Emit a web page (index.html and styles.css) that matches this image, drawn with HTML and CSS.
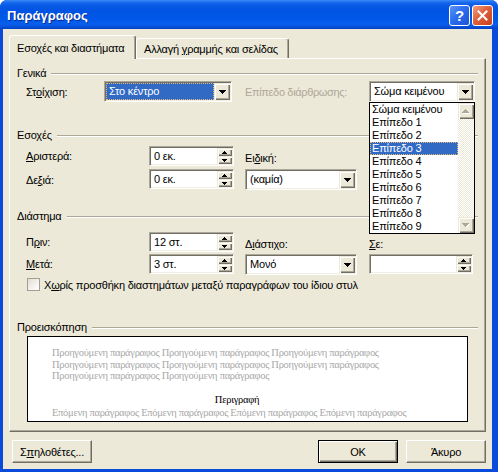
FILE: index.html
```html
<!DOCTYPE html>
<html>
<head>
<meta charset="utf-8">
<link rel="stylesheet" href="styles.css">
</head>
<body>
<div class="window">
  <div class="titlebar">
    <span class="title">Παράγραφος</span>
    <div class="caption-btns">
      <span class="cbtn help">?</span>
      <span class="cbtn close"><svg width="11" height="11" viewBox="0 0 11 11"><path d="M1.5 1.5L9.5 9.5M9.5 1.5L1.5 9.5" stroke="#fff" stroke-width="2" stroke-linecap="square"/></svg></span>
    </div>
  </div>
  <div class="client">
    <div class="tabs">
      <div class="tab active">Εσο<u>χ</u>ές και διαστήματα</div>
      <div class="tab second">Αλλαγή <u>γ</u>ραμμής και σελίδας</div>
    </div>
    <div class="pane">
      <div class="group-head"><span>Γενικά</span><i></i></div>
      <div class="row-gen">
        <span class="lbl">Στ<u>ο</u>ίχιση:</span>
        <div class="combo">
          <span class="val sel">Στο κέντρο</span>
          <span class="ddbtn"><svg width="7" height="4" shape-rendering="crispEdges"><path d="M0 0h7v1h-1v1h-1v1h-1v1h-1v-1h-1v-1h-1v-1h-1z"/></svg></span>
        </div>
        <span></span>
        <span class="lbl-dis">Επίπεδο διάρθρωσης:</span>
        <div class="combo">
          <span class="val">Σώμα κειμένου</span>
          <span class="ddbtn"><svg width="7" height="4" shape-rendering="crispEdges"><path d="M0 0h7v1h-1v1h-1v1h-1v1h-1v-1h-1v-1h-1v-1h-1z"/></svg></span>
          <div class="ddlist">
            <div class="items">
              <div class="item">Σώμα κειμένου</div>
              <div class="item">Επίπεδο 1</div>
              <div class="item">Επίπεδο 2</div>
              <div class="item hl">Επίπεδο 3</div>
              <div class="item">Επίπεδο 4</div>
              <div class="item">Επίπεδο 5</div>
              <div class="item">Επίπεδο 6</div>
              <div class="item">Επίπεδο 7</div>
              <div class="item">Επίπεδο 8</div>
              <div class="item">Επίπεδο 9</div>
            </div>
            <div class="sb">
              <span class="sbbtn"><svg width="8" height="5" shape-rendering="crispEdges"><path d="M1 4h7v1h-7z" fill="#fff"/><path d="M3 0h1v1h1v1h1v1h1v1h-7v-1h1v-1h1v-1h1z" fill="#ACA899"/></svg></span>
              <span class="track"></span>
              <span class="sbbtn"><svg width="8" height="5" shape-rendering="crispEdges"><path d="M1 1h7v1h-1v1h-1v1h-1v1h-1v-1h-1v-1h-1v-1h-1z" fill="#fff"/><path d="M0 0h7v1h-1v1h-1v1h-1v1h-1v-1h-1v-1h-1v-1h-1z" fill="#ACA899"/></svg></span>
            </div>
          </div>
        </div>
      </div>

      <div class="group-head g2"><span>Εσοχές</span><i></i></div>
      <div class="grid-ind">
        <span class="lbl"><u>Α</u>ριστερά:</span>
        <div class="spin"><span class="val">0 εκ.</span><span class="sbtns"><span><svg width="5" height="3" shape-rendering="crispEdges"><path d="M2 0h1v1h1v1h1v1h-5v-1h1v-1h1z"/></svg></span><span><svg width="5" height="3" shape-rendering="crispEdges"><path d="M0 0h5v1h-1v1h-1v1h-1v-1h-1v-1h-1z"/></svg></span></span></div>
        <span></span>
        <span class="lbl-top">Ει<u>δ</u>ική:</span>
        <span></span><span></span>
        <span class="lbl">Δε<u>ξ</u>ιά:</span>
        <div class="spin"><span class="val">0 εκ.</span><span class="sbtns"><span><svg width="5" height="3" shape-rendering="crispEdges"><path d="M2 0h1v1h1v1h1v1h-5v-1h1v-1h1z"/></svg></span><span><svg width="5" height="3" shape-rendering="crispEdges"><path d="M0 0h5v1h-1v1h-1v1h-1v-1h-1v-1h-1z"/></svg></span></span></div>
        <span></span>
        <div class="combo"><span class="val">(καμία)</span><span class="ddbtn"><svg width="7" height="4" shape-rendering="crispEdges"><path d="M0 0h7v1h-1v1h-1v1h-1v1h-1v-1h-1v-1h-1v-1h-1z"/></svg></span></div>
        <span></span><span></span>
      </div>

      <div class="group-head g3"><span>Διάστημα</span><i></i></div>
      <div class="grid-sp">
        <span class="lbl">Π<u>ρ</u>ιν:</span>
        <div class="spin"><span class="val">12 στ.</span><span class="sbtns"><span><svg width="5" height="3" shape-rendering="crispEdges"><path d="M2 0h1v1h1v1h1v1h-5v-1h1v-1h1z"/></svg></span><span><svg width="5" height="3" shape-rendering="crispEdges"><path d="M0 0h5v1h-1v1h-1v1h-1v-1h-1v-1h-1z"/></svg></span></span></div>
        <span></span>
        <span class="lbl-top">Δ<u>ι</u>άστιχο:</span>
        <span></span>
        <span class="lbl-top"><u>Σ</u>ε:</span>
        <span class="lbl"><u>Μ</u>ετά:</span>
        <div class="spin"><span class="val">3 στ.</span><span class="sbtns"><span><svg width="5" height="3" shape-rendering="crispEdges"><path d="M2 0h1v1h1v1h1v1h-5v-1h1v-1h1z"/></svg></span><span><svg width="5" height="3" shape-rendering="crispEdges"><path d="M0 0h5v1h-1v1h-1v1h-1v-1h-1v-1h-1z"/></svg></span></span></div>
        <span></span>
        <div class="combo"><span class="val">Μονό</span><span class="ddbtn"><svg width="7" height="4" shape-rendering="crispEdges"><path d="M0 0h7v1h-1v1h-1v1h-1v1h-1v-1h-1v-1h-1v-1h-1z"/></svg></span></div>
        <span></span>
        <div class="spin"><span class="val"></span><span class="sbtns"><span><svg width="5" height="3" shape-rendering="crispEdges"><path d="M2 0h1v1h1v1h1v1h-5v-1h1v-1h1z"/></svg></span><span><svg width="5" height="3" shape-rendering="crispEdges"><path d="M0 0h5v1h-1v1h-1v1h-1v-1h-1v-1h-1z"/></svg></span></span></div>
      </div>

      <div class="check-row"><span class="chk"></span><span>Χ<u>ω</u>ρίς προσθήκη διαστημάτων μεταξύ παραγράφων του ίδιου στυλ</span></div>

      <div class="group-head g4"><span>Προεισκόπηση</span><i></i></div>
      <div class="preview">
        <div class="prev">Προηγούμενη παράγραφος Προηγούμενη παράγραφος Προηγούμενη παράγραφος<br>Προηγούμενη παράγραφος Προηγούμενη παράγραφος Προηγούμενη παράγραφος<br>Προηγούμενη παράγραφος Προηγούμενη παράγραφος</div>
        <div class="cur">Περιγραφή</div>
        <div class="prev next">Επόμενη παράγραφος Επόμενη παράγραφος Επόμενη παράγραφος Επόμενη παράγραφος</div>
      </div>
    </div>
    <div class="buttons">
      <span class="btn">Σ<u>π</u>ηλοθέτες...</span>
      <span class="spacer"></span>
      <span class="btn default">OK</span>
      <span class="btn">Άκυρο</span>
    </div>
  </div>
</div>
</body>
</html>
```
FILE: styles.css
```css
* { box-sizing: border-box; }
html, body { margin: 0; padding: 0; }
body {
  width: 498px; height: 472px; overflow: hidden; background: #fff;
  font-family: "Liberation Sans", Arial, sans-serif; font-size: 11px; color: #000;
  letter-spacing: -0.2px;
}
u { text-decoration: underline; text-underline-offset: 1px; }

.window {
  width: 498px; height: 472px; display: flex; flex-direction: column;
  background: #0A4BDC; border-radius: 7px 7px 0 0; overflow: hidden;
}
.titlebar {
  height: 29px; flex: none; display: flex; align-items: center;
  padding: 0 5px 0 7px;
  background: linear-gradient(to bottom, #3B8DF8 0, #2C7BF2 1px, #1366EC 3px, #0658E4 6px, #0054E3 12px, #0058E8 20px, #0A5FEC 24px, #0550D8 27px, #0440C0 29px);
}
.title {
  flex: 1; color: #fff; font-weight: bold; font-size: 13px; letter-spacing: 0;
  font-family: "Liberation Sans", Arial, sans-serif;
  text-shadow: 1px 1px #0B2C9A; margin-top: 1px;
}
.caption-btns { display: flex; gap: 2px; margin-top: 1px; }
.cbtn {
  width: 21px; height: 21px; border: 1px solid #fff; border-radius: 3px;
  display: flex; align-items: center; justify-content: center;
}
.help {
  background: linear-gradient(135deg, #5C93F7 0%, #2A6AEB 50%, #1C54D8 100%);
  color: #fff; font: bold 15px "Liberation Sans", Arial, sans-serif;
}
.close { background: linear-gradient(135deg, #EE9F82 0%, #E0603A 45%, #C8401C 100%); }

.client {
  flex: 1; background: #ECE9D8; margin: 0 6px 3px 3px;
  display: flex; flex-direction: column;
}
.tabs { height: 29px; flex: none; display: flex; align-items: flex-end; padding-left: 6px; }
.tab {
  background: #ECE9D8; border-top: 1px solid #fff; border-left: 1px solid #fff;
  border-right: 1px solid #716F64; box-shadow: inset -1px 0 #ACA899;
  border-radius: 3px 3px 0 0; padding: 0 7px; line-height: 13px; white-space: nowrap;
}
.tab.active {
  width: 127px; height: 24px; padding-top: 6px; margin-bottom: -1px;
  position: relative; z-index: 2;
}
.tab.second { width: 153px; height: 20px; padding-top: 4px; }

.pane {
  height: 374px; flex: none; margin: 0 6px; position: relative;
  border: 1px solid; border-color: #fff #716F64 #716F64 #fff;
  box-shadow: inset -1px -1px #ACA899;
  padding: 0 7px;
}
.group-head { display: flex; align-items: center; height: 13px; line-height: 13px; margin-top: 8px; }
.group-head i {
  flex: 1; height: 2px; margin-left: 5px; margin-top: 1px;
  border-top: 1px solid #ACA899; border-bottom: 1px solid #fff;
}
.group-head.g2 { margin-top: 27px; }
.group-head.g3 { margin-top: 20px; }
.group-head.g4 { margin-top: 30px; }

.lbl { padding-left: 9px; align-self: center; white-space: nowrap; }
.lbl-dis { color: #ACA899; align-self: center; white-space: nowrap; letter-spacing: -0.35px; }
.lbl-top { align-self: end; line-height: 13px; white-space: nowrap; margin-bottom: 1px; }

.row-gen {
  display: grid; grid-template-columns: 87px 128px 13px 124px 106px;
  height: 21px; margin-top: 1px;
}
.grid-ind {
  display: grid; grid-template-columns: 132px 85px 11px 112px 12px 104px;
  grid-template-rows: 20px 21px; row-gap: 3px; margin-top: 4px;
}
.grid-sp {
  display: grid; grid-template-columns: 132px 85px 11px 112px 12px 104px;
  grid-template-rows: 20px 20px; row-gap: 2px; margin-top: 9px;
}

.combo, .spin {
  position: relative; display: flex; background: #fff; padding: 2px;
  border: 1px solid; border-color: #ACA899 #fff #fff #ACA899;
  box-shadow: inset 1px 1px #716F64, inset -1px -1px #F1EFE2;
}
.combo { height: 21px; }
.spin { height: 20px; }
.combo .val, .spin .val { flex: 1; padding-left: 2px; white-space: nowrap; overflow: hidden; }
.combo .val { line-height: 15px; }
.combo .val.sel {
  background: #316AC5; color: #fff; margin: -1px 0 -1px -1px; padding-left: 3px; line-height: 17px;
  outline: 1px dotted #E8B878; outline-offset: -1px;
}
.spin .val { line-height: 14px; }
.ddbtn, .sbtns > span, .sbbtn {
  background: #ECE9D8; display: flex; align-items: center; justify-content: center;
  box-shadow: inset 1px 1px #ECE9D8, inset 2px 2px #fff, inset -1px -1px #716F64, inset -2px -2px #ACA899;
}
.ddbtn { width: 16px; margin: -1px -1px -1px 0; }
.ddbtn svg, .sbtns svg { display: block; }
.sbtns { width: 15px; display: flex; flex-direction: column; margin: -1px -1px -1px 0; }
.sbtns > span { flex: 1; }

.ddlist {
  position: absolute; left: -1px; top: calc(100% + 1px); width: 106px; height: 132px;
  border: 1px solid #000; background: #fff; display: flex; z-index: 5;
}
.items { flex: 1; }
.item { height: 13px; line-height: 13px; padding-left: 2px; white-space: nowrap; }
.item.hl { background: #316AC5; color: #fff; outline: 1px dotted #E8B878; outline-offset: -1px; }
.sb { width: 16px; display: flex; flex-direction: column; }
.sbbtn { height: 16px; flex: none; }
.track {
  flex: 1;
  background: repeating-conic-gradient(#fff 0 25%, #ECE9D8 0 50%) 0 0 / 2px 2px;
}

.check-row { display: flex; align-items: center; margin-top: 4px; padding-left: 10px; height: 13px; white-space: nowrap; }
.chk {
  width: 13px; height: 13px; margin-right: 4px; border: 1px solid #A29F91;
  background: linear-gradient(135deg, #E0DED4 0%, #F4F3EE 60%, #fff 100%);
}

.preview {
  margin: 2px 10px 0 10px; height: 86px; background: #fff; border: 1px solid #000;
  padding: 10px 45px 0 24px;
  font-family: "Liberation Serif", "Times New Roman", serif; font-size: 10.5px;
  line-height: 11.5px; letter-spacing: -0.3px;
}
.prev { color: #A8A8A8; white-space: nowrap; }
.cur { text-align: center; margin-top: 12px; }
.next { margin-top: 2px; }

.buttons { display: flex; margin-top: 8px; padding: 0 6px 0 9px; }
.spacer { flex: 1; }
.btn {
  width: 80px; height: 23px; display: flex; align-items: center; justify-content: center;
  border: 1px solid; border-color: #fff #716F64 #716F64 #fff;
  box-shadow: inset -1px -1px #ACA899;
}
.btn.default {
  border: 1px solid #000; margin-right: 8px;
  box-shadow: inset 1px 1px #fff, inset -1px -1px #716F64, inset -2px -2px #ACA899;
}
```
